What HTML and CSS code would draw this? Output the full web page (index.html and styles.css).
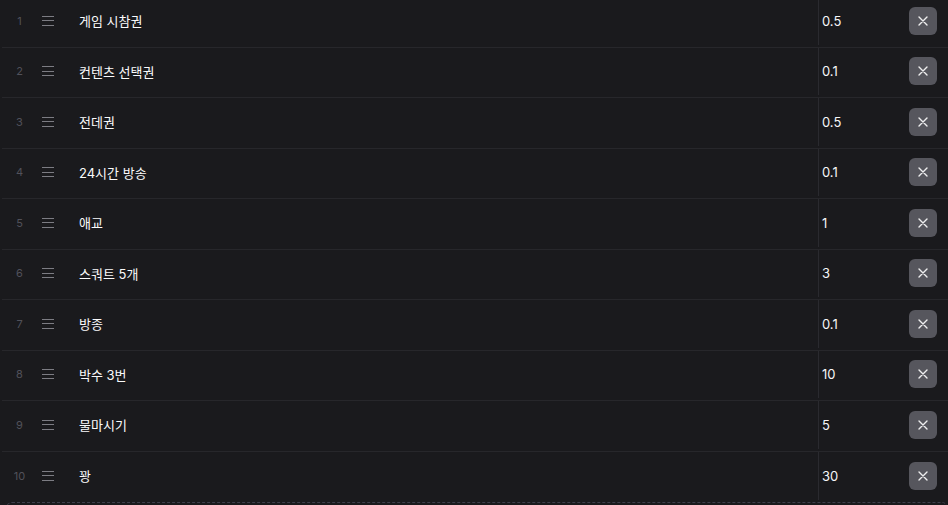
FILE: index.html
```html
<!DOCTYPE html>
<html lang="ko">
<head>
    <meta charset="UTF-8">
    <meta name="viewport" content="width=device-width, initial-scale=1.0">
    <title>Rewards</title>
    <link rel="stylesheet" href="styles.css">
</head>
<body>
    <div class="list">
        <div class="row"><div class="idx">1</div><div class="handle"><span></span></div><div class="name">게임 시참권</div><div class="value">0.5</div><div class="action"><button class="remove"><svg viewBox="0 0 10 10"><path d="M1 1L9 9M9 1L1 9"/></svg></button></div></div>
        <div class="row"><div class="idx">2</div><div class="handle"><span></span></div><div class="name">컨텐츠 선택권</div><div class="value">0.1</div><div class="action"><button class="remove"><svg viewBox="0 0 10 10"><path d="M1 1L9 9M9 1L1 9"/></svg></button></div></div>
        <div class="row"><div class="idx">3</div><div class="handle"><span></span></div><div class="name">전데권</div><div class="value">0.5</div><div class="action"><button class="remove"><svg viewBox="0 0 10 10"><path d="M1 1L9 9M9 1L1 9"/></svg></button></div></div>
        <div class="row"><div class="idx">4</div><div class="handle"><span></span></div><div class="name">24시간 방송</div><div class="value">0.1</div><div class="action"><button class="remove"><svg viewBox="0 0 10 10"><path d="M1 1L9 9M9 1L1 9"/></svg></button></div></div>
        <div class="row"><div class="idx">5</div><div class="handle"><span></span></div><div class="name">애교</div><div class="value">1</div><div class="action"><button class="remove"><svg viewBox="0 0 10 10"><path d="M1 1L9 9M9 1L1 9"/></svg></button></div></div>
        <div class="row"><div class="idx">6</div><div class="handle"><span></span></div><div class="name">스쿼트 5개</div><div class="value">3</div><div class="action"><button class="remove"><svg viewBox="0 0 10 10"><path d="M1 1L9 9M9 1L1 9"/></svg></button></div></div>
        <div class="row"><div class="idx">7</div><div class="handle"><span></span></div><div class="name">방종</div><div class="value">0.1</div><div class="action"><button class="remove"><svg viewBox="0 0 10 10"><path d="M1 1L9 9M9 1L1 9"/></svg></button></div></div>
        <div class="row"><div class="idx">8</div><div class="handle"><span></span></div><div class="name">박수 3번</div><div class="value">10</div><div class="action"><button class="remove"><svg viewBox="0 0 10 10"><path d="M1 1L9 9M9 1L1 9"/></svg></button></div></div>
        <div class="row"><div class="idx">9</div><div class="handle"><span></span></div><div class="name">물마시기</div><div class="value">5</div><div class="action"><button class="remove"><svg viewBox="0 0 10 10"><path d="M1 1L9 9M9 1L1 9"/></svg></button></div></div>
        <div class="row"><div class="idx">10</div><div class="handle"><span></span></div><div class="name">꽝</div><div class="value">30</div><div class="action"><button class="remove"><svg viewBox="0 0 10 10"><path d="M1 1L9 9M9 1L1 9"/></svg></button></div></div>
    </div>
    <div class="add-box"></div>
</body>
</html>
```

FILE: styles.css
```css
body {
    margin: 0;
    background-color: #1a1a1d;
    font-family: Inter, "Noto Sans CJK KR", sans-serif;
    color: #ececef;
    overflow: hidden;
}

.list {
    margin-top: -3px;
    margin-left: 2px;
}

.row {
    display: grid;
    grid-template-columns: 34px 30px 752px 80px 1fr;
    height: 50.5px;
    box-sizing: border-box;
    padding-bottom: 2px;
    border-bottom: 1px solid #27272b;
}

.row:last-child {
    border-bottom: none;
}

.row > div {
    display: flex;
    align-items: center;
}

.idx {
    justify-content: center;
    font-size: 11px;
    color: #51515a;
    padding-left: 1px;
}

.handle {
    padding-left: 6px;
}

/* three-line drag handle */
.handle span {
    display: block;
    width: 12px;
    height: 8px;
    border-top: 1px solid #7c7c83;
    border-bottom: 1px solid #7c7c83;
    position: relative;
}

.handle span::after {
    content: "";
    position: absolute;
    left: 0;
    right: 0;
    top: 3.5px;
    height: 1px;
    background-color: #7c7c83;
}

.name {
    padding-left: 13px;
    font-size: 13px;
    font-weight: 400;
    color: #fafafb;
}

.value {
    border-left: 1px solid #2a2a2f;
    padding-left: 3px;
    font-size: 13px;
    font-weight: 400;
    color: #f6f6f8;
}

.action {
    justify-content: center;
}

.remove {
    width: 28px;
    height: 28px;
    border: none;
    border-radius: 6px;
    background-color: #56565d;
    padding: 0;
    cursor: pointer;
    display: flex;
    align-items: center;
    justify-content: center;
}

.remove svg {
    width: 10px;
    height: 10px;
    fill: none;
    stroke: #eeeeef;
    stroke-width: 1.4;
    stroke-linecap: round;
}

.add-box {
    margin: 0 0 0 6px;
    height: 40px;
    border: 1px dashed #3e3e4c;
    border-radius: 6px;
}
```
